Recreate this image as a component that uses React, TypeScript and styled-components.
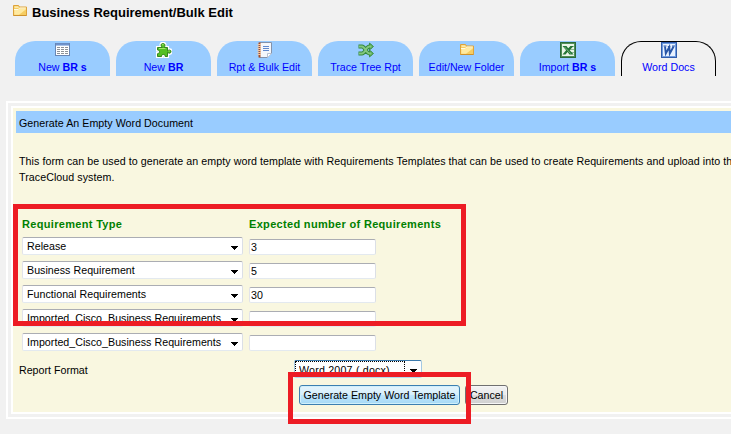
import React from "react";
import styled, { createGlobalStyle, css } from "styled-components";

const Global = createGlobalStyle`
  * { box-sizing: border-box; }
  body { margin: 0; background: #f1f1f1; }
  body, input, select, button {
    font-family: "Liberation Sans", Arial, sans-serif;
    font-size: 10.67px;
    color: #000;
  }
`;

const Page = styled.div`
  position: relative;
  width: 731px;
  height: 434px;
  overflow: hidden;
  background: #f1f1f1;
`;

const Heading = styled.header`
  display: flex;
  height: 41px;
  padding: 3px 0 0 12px;
`;

const Title = styled.h1`
  margin: 0 0 0 4px;
  font-size: 13px;
  line-height: 20px;
  font-weight: bold;
  white-space: nowrap;
`;

const Tabs = styled.nav`
  display: flex;
  gap: 6px;
  padding-left: 15px;
`;

const Tab = styled.a<{ $active?: boolean }>`
  display: flex;
  flex-direction: column;
  align-items: center;
  width: 95px;
  height: 35px;
  padding-top: 1px;
  border-radius: 20px 20px 0 0;
  background: #99ccff;
  color: #0000ff;
  line-height: 18px;
  white-space: nowrap;
  ${(p) =>
    p.$active &&
    css`
      background: #f1f1f1;
      border: 1px solid #000;
      border-bottom: 0;
      padding-top: 0;
    `}
`;

const Frame = styled.main`
  width: 760px;
  height: 318px;
  margin: 25px 0 0 6px;
  padding: 3px;
  border: 2px solid #fff;
`;

const Panel = styled.section`
  height: 308px;
  border: 2px solid #fff;
  background: #f9f7e0;
  padding: 3px;
`;

const PanelTitle = styled.h2`
  margin: 0;
  height: 22px;
  padding-left: 3px;
  background: #99ccff;
  font-size: 10.67px;
  font-weight: normal;
  letter-spacing: 0.04px;
  line-height: 24px;
`;

const Intro = styled.p`
  margin: 20px 0 0 3px;
  height: 61px;
  letter-spacing: 0.06px;
  line-height: 16px;
  white-space: nowrap;
`;

const Grid = styled.div`
  display: grid;
  grid-template-columns: 221px 127px;
  grid-template-rows: 17px repeat(5, 18px);
  column-gap: 6px;
  row-gap: 6px;
  align-items: end;
  margin-left: 6px;
`;

const ColumnTitle = styled.div`
  align-self: start;
  color: #008000;
  font-size: 11px;
  font-weight: bold;
  letter-spacing: 0.32px;
  line-height: 20px;
  white-space: nowrap;
`;

const SelectBox = styled.div<{ $focus?: boolean }>`
  position: relative;
  width: ${(p) => (p.$focus ? "128px" : "221px")};
  height: 18px;
  border: 1px solid;
  border-color: ${(p) => (p.$focus ? "#3d7bad #a4c9e3 #b7d9ed #a4c9e3" : "#abadb3 #dbdfe6 #e3e9ef #e2e3ea")};
  border-radius: 2px;
  background: #fff;

  svg {
    position: absolute;
    right: 4px;
    top: 8px;
  }
`;

const NativeSelect = styled.select<{ $focus?: boolean }>`
  display: block;
  appearance: none;
  width: ${(p) => (p.$focus ? "110px" : "200px")};
  height: 16px;
  margin: 0;
  padding: 0 0 0 ${(p) => (p.$focus ? "3px" : "4px")};
  border: ${(p) => (p.$focus ? "1px dotted #000" : "0")};
  border-radius: 0;
  background: transparent;
  outline: none;
  letter-spacing: ${(p) => (p.$focus ? "0.2px" : "0.03px")};
  line-height: 16px;
`;

const CountInput = styled.input`
  width: 127px;
  height: 16px;
  margin: 0;
  padding: 0 1px 1px;
  border: 1px solid;
  border-color: #abadb3 #dbdfe6 #e3e9ef #e2e3ea;
  border-radius: 2px;
  background: #fff;
  outline: none;
`;

const FormatRow = styled.div`
  display: grid;
  grid-template-columns: 275px 128px;
  height: 25px;
  margin: 9px 0 0 3px;
  line-height: 20px;
`;

const Actions = styled.div`
  display: flex;
  gap: 5px;
  margin-left: 283px;
`;

const Button = styled.button<{ $primary?: boolean }>`
  width: ${(p) => (p.$primary ? "161px" : "43px")};
  height: 20px;
  padding: 0;
  border: 1px solid ${(p) => (p.$primary ? "#3c7fb1" : "#707070")};
  border-radius: 3px;
  background: ${(p) =>
    p.$primary
      ? "linear-gradient(#e5f4fc, #d6effc 48%, #bee6fd 50%, #a7d9f5)"
      : "linear-gradient(#f2f2f2, #ebebeb 48%, #dddddd 50%, #cfcfcf)"};
  box-shadow: inset 0 0 0 1px ${(p) => (p.$primary ? "#d0f0fb" : "#f6f6f6")};
  line-height: 18px;
  white-space: nowrap;
`;

const Highlight = styled.div<{ $x: number; $y: number; $w: number; $h: number }>`
  position: absolute;
  left: ${(p) => p.$x}px;
  top: ${(p) => p.$y}px;
  width: ${(p) => p.$w}px;
  height: ${(p) => p.$h}px;
  border: 5px solid #ed1c24;
  pointer-events: none;
`;

const Icon = ({ children }: { children: React.ReactNode }) => (
  <svg width="16" height="16" viewBox="0 0 16 16">
    {children}
  </svg>
);

const FolderIcon = () => (
  <Icon>
    <path d="M1.500 12.500v-10h5l1 1.500h7v8.500z" fill="#f6cd62" stroke="#dda33c" />
    <path d="M2.500 4.800V3.400h3.600l.9 1.400z" fill="#fff3c5" />
    <path d="M2.300 11.800V7h4.200l1.300-1.500h6v1L7 11.800z" fill="#ffeaa1" />
    <path d="M2 6.500h4.400L7.600 5h6.200" fill="none" stroke="#fffbe5" />
    <path d="M1.500 12.500h13" stroke="#cf922c" />
  </Icon>
);

const TableIcon = () => (
  <Icon>
    <rect x=".5" y="1.500" width="14" height="12" fill="#fff" stroke="#6886b5" />
    <path d="M1 2.500h13" stroke="#6f93cc" strokeWidth="2" />
    <path d="M1 3.500h13" stroke="#a9c2e7" />
    <path d="M2 5.500h11M2 7.500h11M2 9.500h11M2 11.500h11" stroke="#8d9197" strokeDasharray="3 1" />
  </Icon>
);

const PuzzleIcon = () => (
  <Icon>
    <path
      d="M1 5h4.300C3.600 2.500 5 .8 7 .8S10.200 2.500 8.900 5H12v3c2-1.300 3.600-.3 3.600 1.600S14 12.600 12 11.200V15H8.800c.5-2.400-3-2.400-2.700 0H1v-3.800c2.500.5 2.500-3 0-2.700z"
      fill="#4fb520"
      stroke="#fff"
      strokeWidth="2.200"
    />
    <path
      d="M1.500 5.500h4.700C4 3 5.300 1.500 7 1.500S9.800 3 8.200 5.500h3.300v3.300c2-1.600 3.500-.6 3.500.8s-1.500 2.300-3.500.8v4.100H9.200c0-2.800-3.800-2.800-3.700 0h-4v-2.800c2.800-.3 2.500-3.700 0-3.800z"
      fill="#54bf24"
      stroke="#287c13"
      strokeWidth=".9"
    />
    <path d="M3 6.500h6.500M6 2.700h1.700M12.500 9h1.300" stroke="#a0e764" />
  </Icon>
);

const NotebookIcon = () => (
  <Icon>
    <path d="M2.500 .5h12v11l-4 4h-8z" fill="#f4f7fc" stroke="#8492aa" />
    <path d="M2.500 .5v15" stroke="#a64e2a" strokeWidth="2" />
    <path d="M.5 2.500h3.500M.5 4.500h3.500M.5 6.500h3.500M.5 8.500h3.500M.5 10.500h3.500M.5 12.500h3.500" stroke="#efc7a1" />
    <path d="M6 4.500h6M6 6.500h6M6 8.500h6" stroke="#6189ce" />
    <path d="M14.500 11.500h-4v4" fill="#fff" stroke="#b5c0d2" />
  </Icon>
);

const ShuffleIcon = () => (
  <Icon>
    <path
      d="M.5 4.500H4c3 0 4 7 7.500 7h2M.5 11.500H4c3 0 4-7 7.500-7h2"
      fill="none"
      stroke="#34883c"
      strokeWidth="3.800"
    />
    <path
      d="M11.500 1l4 3.500-4 3.500zM11.500 8l4 3.500-4 3.500z"
      fill="#58ac57"
      stroke="#34883c"
      strokeWidth=".8"
    />
    <path
      d="M1 4.500h3c3 0 4 7 7.500 7h2M1 11.500h3c3 0 4-7 7.500-7h2"
      fill="none"
      stroke="#83c880"
      strokeWidth="1.800"
    />
  </Icon>
);

const ExcelIcon = () => (
  <Icon>
    <rect x=".5" y=".5" width="15" height="15" fill="#eaf5e8" stroke="#2b6b3a" />
    <rect x="1.500" y="1.500" width="13" height="13" fill="none" stroke="#4f8f57" />
    <path d="M10 4.500h4M10 7.500h4M10 10.500h4" stroke="#90b996" />
    <path d="M2.500 4h4l1.700 2.300L10.500 4h3L9.700 8.200l4 4.300H9.400L7.600 10l-2.100 2.500h-3l3.600-4.300z" fill="#237535" />
    <path d="M4.500 5l6.200 6.600" stroke="#91c68f" strokeWidth=".8" />
  </Icon>
);

const WordIcon = () => (
  <Icon>
    <rect x=".5" y=".5" width="15" height="15" fill="#e8f1ff" stroke="#315cab" />
    <rect x="1.500" y="1.500" width="13" height="13" fill="none" stroke="#6f9ce0" />
    <path d="M4 4.500l.8 7L8.300 5l.5 6.500L12.600 4.500" fill="none" stroke="#2856a7" strokeWidth="1.900" />
    <path d="M2.500 4h3M6.800 4.500h2.500M11 4h3" stroke="#2856a7" />
  </Icon>
);

const Arrow = () => (
  <svg width="7" height="4" viewBox="0 0 7 4">
    <path d="M0 0h7v1H6v1H5v1H4v1H3V3H2V2H1V1H0z" fill="#000" />
  </svg>
);

const tabs = [
  { icon: <TableIcon />, label: <>New <b>BR s</b></> },
  { icon: <PuzzleIcon />, label: <>New <b>BR</b></> },
  { icon: <NotebookIcon />, label: "Rpt & Bulk Edit" },
  { icon: <ShuffleIcon />, label: "Trace Tree Rpt" },
  { icon: <FolderIcon />, label: "Edit/New Folder" },
  { icon: <ExcelIcon />, label: <>Import <b>BR s</b></> },
  { icon: <WordIcon />, label: "Word Docs", active: true },
];

const rows = [
  ["Release", "3"],
  ["Business Requirement", "5"],
  ["Functional Requirements", "30"],
  ["Imported_Cisco_Business Requirements", ""],
  ["Imported_Cisco_Business Requirements", ""],
];

const Dropdown = ({ value, focus }: { value: string; focus?: boolean }) => (
  <SelectBox $focus={focus}>
    <NativeSelect $focus={focus} defaultValue={value}>
      <option>{value}</option>
    </NativeSelect>
    <Arrow />
  </SelectBox>
);

export default function App() {
  return (
    <Page>
      <Global />
      <Heading>
        <FolderIcon />
        <Title>Business Requirement/Bulk Edit</Title>
      </Heading>
      <Tabs>
        {tabs.map((t, i) => (
          <Tab key={i} $active={t.active}>
            {t.icon}
            <span>{t.label}</span>
          </Tab>
        ))}
      </Tabs>
      <Frame>
        <Panel>
          <PanelTitle>Generate An Empty Word Document</PanelTitle>
          <Intro>
            This form can be used to generate an empty word template with Requirements Templates that can be used to
            create Requirements and upload into the
            <br />
            TraceCloud system.
          </Intro>
          <Grid>
            <ColumnTitle>Requirement Type</ColumnTitle>
            <ColumnTitle>Expected number of Requirements</ColumnTitle>
            {rows.map(([type, count], i) => (
              <React.Fragment key={i}>
                <Dropdown value={type} />
                <CountInput defaultValue={count} />
              </React.Fragment>
            ))}
          </Grid>
          <FormatRow>
            <span>Report Format</span>
            <Dropdown value="Word 2007 (.docx)" focus />
          </FormatRow>
          <Actions>
            <Button $primary>Generate Empty Word Template</Button>
            <Button>Cancel</Button>
          </Actions>
        </Panel>
      </Frame>
      <Highlight $x={13} $y={204} $w={453} $h={122} />
      <Highlight $x={288} $y={372} $w={183} $h={52} />
    </Page>
  );
}
